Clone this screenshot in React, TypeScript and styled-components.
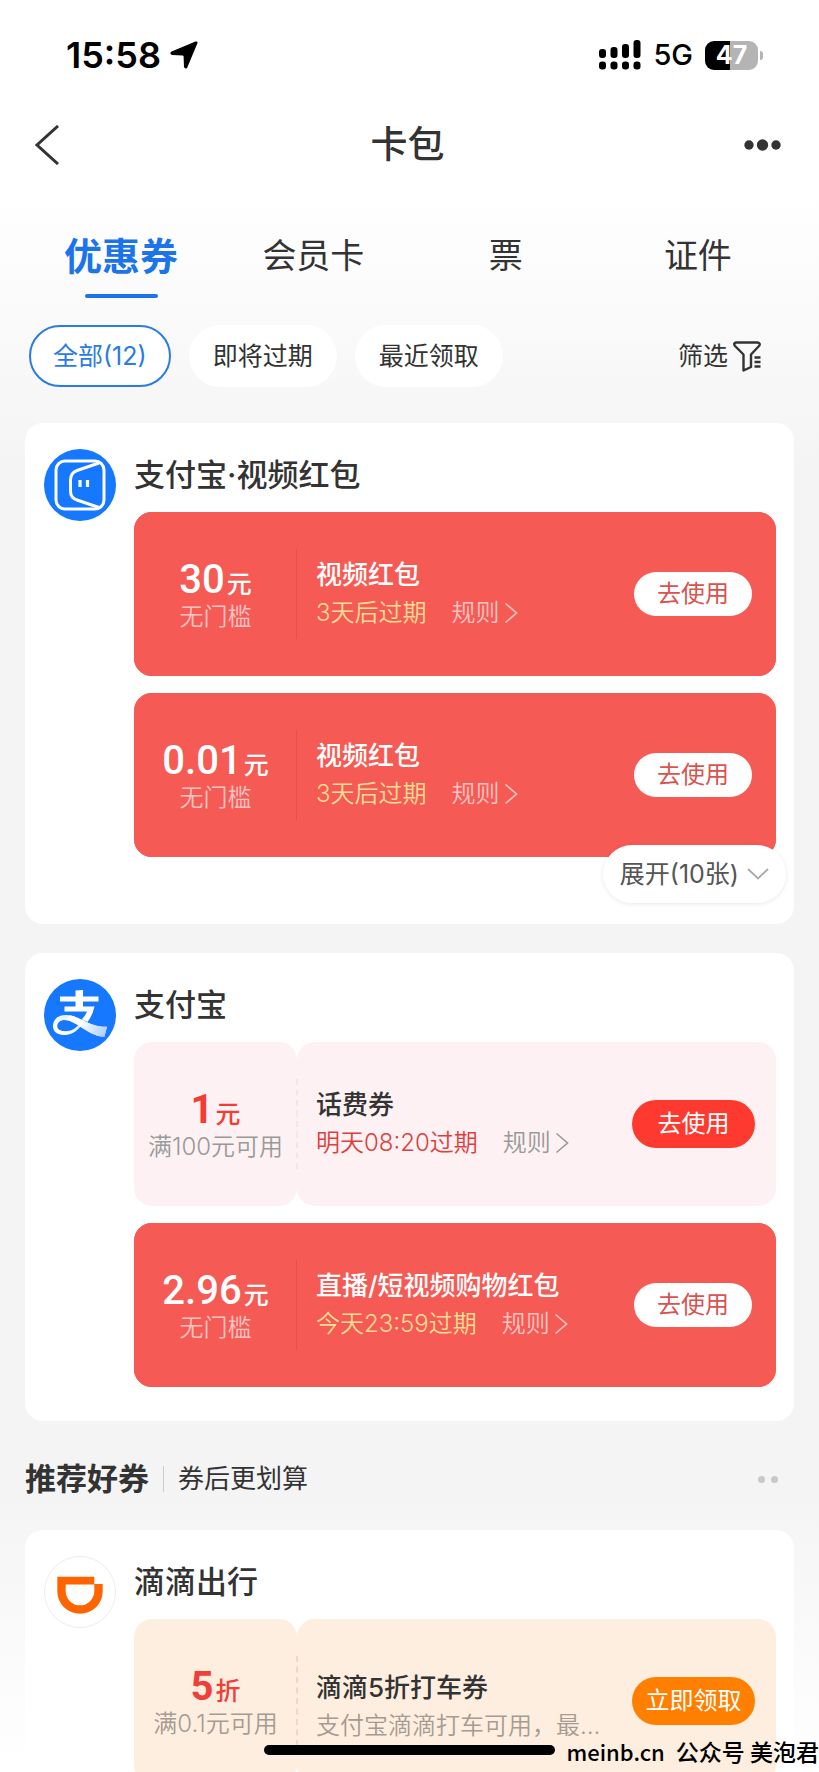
import React from 'react';
import styled, { createGlobalStyle, css } from 'styled-components';

const GlobalStyle = createGlobalStyle`
  *, *::before, *::after { box-sizing: border-box; }
  html, body, #root { height: 100%; }
  body {
    margin: 0;
    font-family: Inter, 'Noto Sans CJK SC', sans-serif;
    color: #333;
  }
  h1, h2, h3, p { margin: 0; font-weight: 500; }
  button {
    font: inherit;
    color: inherit;
    background: none;
    border: 0;
    padding: 0;
    cursor: pointer;
  }
  a { color: inherit; text-decoration: none; }
`;

const Screen = styled.div`
  position: relative;
  height: 100vh;
  overflow: hidden;
  display: flex;
  flex-direction: column;
  background: linear-gradient(#fff 0, #fff 190px, #f4f4f4 470px, #f4f4f4 84%, #fff 100%);
`;

const StatusBar = styled.div`
  flex: none;
  height: 110px;
  padding: 0 61px 0 66px;
  display: flex;
  align-items: center;
  justify-content: space-between;
  color: #000;
`;

const StatusGroup = styled.div<{ $gap: number }>`
  display: flex;
  align-items: center;
  gap: ${p => p.$gap}px;
`;

const Clock = styled.span`
  font-size: 36px;
  line-height: 40px;
  font-weight: 600;
`;

const Network = styled.span`
  font-size: 29px;
  line-height: 32px;
  font-weight: 500;
`;

const Battery = styled.span`
  position: relative;
  width: 53px;
  height: 29px;
  border-radius: 9px;
  background: linear-gradient(90deg, #000 47%, #b4b4b4 47%);
  color: #fff;
  font-size: 25px;
  line-height: 29px;
  font-weight: 700;
  text-align: center;

  &::after {
    content: '';
    position: absolute;
    right: -5px;
    top: 10px;
    width: 3px;
    height: 9px;
    border-radius: 0 3px 3px 0;
    background: #b4b4b4;
  }
`;

const NavBar = styled.header`
  flex: none;
  height: 70px;
  padding: 0 38px 0 34px;
  display: grid;
  grid-template-columns: 1fr auto 1fr;
  align-items: center;
`;

const NavTitle = styled.h1`
  font-size: 37px;
  line-height: 48px;
`;

const NavButton = styled.button<{ $end?: boolean }>`
  display: flex;
  justify-self: ${p => (p.$end ? 'end' : 'start')};
`;

const Tabs = styled.nav`
  flex: none;
  height: 118px;
  padding: 0 25px;
  display: grid;
  grid-template-columns: repeat(4, 1fr);
  align-items: end;
`;

const Tab = styled.button<{ $active?: boolean }>`
  height: 72px;
  display: flex;
  flex-direction: column;
  align-items: center;
  justify-content: space-between;
  font-size: 34px;
  line-height: 60px;

  ${p => p.$active && css`
    font-size: 38px;
    font-weight: 700;
    color: #1b74ea;
    &::after {
      content: '';
      width: 73px;
      height: 4px;
      border-radius: 2px;
      background: #1b74ea;
    }
  `}
`;

const Filters = styled.div`
  flex: none;
  padding: 27px 57px 36px 29px;
  display: flex;
  align-items: center;
  gap: 18px;
`;

const Chip = styled.button<{ $active?: boolean }>`
  height: 62px;
  padding: 0 ${p => (p.$active ? 22 : 24)}px;
  border-radius: 31px;
  border: ${p => (p.$active ? '2px solid #2b7be4' : '0')};
  background: #fff;
  color: ${p => (p.$active ? '#2b7be4' : '#333')};
  font-size: 25px;
  line-height: 32px;
`;

const FilterButton = styled.button`
  margin-left: auto;
  display: flex;
  align-items: center;
  gap: 5px;
  font-size: 25px;
  line-height: 32px;
`;

const Content = styled.main`
  flex: 1;
  min-height: 0;
  padding: 0 25px;
  overflow-y: auto;
  scrollbar-width: none;
`;

const Card = styled.section`
  display: grid;
  grid-template-columns: 72px 1fr;
  column-gap: 18px;
  align-items: start;
  padding: 25px 18px 34px 19px;
  margin-bottom: 29px;
  border-radius: 18px;
  background: #fff;
`;

const Logo = styled.svg`
  width: 72px;
  height: 72px;
  margin-top: 1px;
  display: block;
`;

const CardTitle = styled.h2`
  font-size: 31px;
  line-height: 54px;
  margin-bottom: 10px;
`;

const CouponList = styled.div`
  display: grid;
  gap: 17px;
`;

type Tone = 'red' | 'pink' | 'orange';

const tones = {
  red: { bg: '#f65a54', amount: '#fff', label: '#fcc4c1', title: '#fff', note: '#ffdd95', btn: '#fff', btnText: '#d9534f' },
  pink: { bg: '#fdf1f3', amount: '#f33c34', label: '#999', title: '#333', note: '#dd403c', btn: '#fe3a30', btnText: '#fff' },
  orange: { bg: '#feeedf', amount: '#ee3f3b', label: '#a59b92', title: '#333', note: '#a59b92', btn: '#ff8000', btnText: '#fff' },
};

const CouponBox = styled.article<{ $tone: Tone }>`
  position: relative;
  display: grid;
  grid-template-columns: 163px 1fr;
  height: 164px;
  border-radius: 18px;
  background: ${p => (p.$tone === 'red' ? tones.red.bg : 'none')};

  &::after {
    content: '';
    position: absolute;
    left: 162px;
    top: 37px;
    bottom: 37px;
    border-left: ${p => (p.$tone === 'red' ? '1px solid #e4504b' : p.$tone === 'pink' ? '2px dashed #f8e3e6' : '2px dashed #efd8c6')};
  }
`;

const Part = styled.div<{ $tone: Tone }>`
  min-width: 0;
  border-radius: 18px;
  background: ${p => tones[p.$tone].bg};
`;

const AmountPart = styled(Part)`
  padding-top: 4px;
  display: flex;
  flex-direction: column;
  justify-content: center;
  align-items: center;
`;

const Amount = styled.p<{ $tone: Tone }>`
  height: 42px;
  color: ${p => tones[p.$tone].amount};
  font-family: Roboto, 'Noto Sans CJK SC', sans-serif;
  font-size: 40px;
  line-height: 46px;
  white-space: nowrap;
  font-weight: ${p => (p.$tone === 'red' ? 500 : 700)};
`;

const Unit = styled.span`
  font-size: 25px;
  font-weight: 500;
  margin-left: 2px;
`;

const Condition = styled.p<{ $tone: Tone }>`
  color: ${p => tones[p.$tone].label};
  font-size: 24px;
  line-height: 36px;
  font-weight: 350;
  white-space: nowrap;
`;

const InfoPart = styled(Part)`
  padding: 0 21px 0 19px;
  display: flex;
  align-items: center;
`;

const Info = styled.div<{ $tone: Tone }>`
  flex: 1;
  min-width: 0;
  padding: ${p => (p.$tone === 'orange' ? 12 : 0)}px 0 2px;
`;

const CouponTitle = styled.h3<{ $tone: Tone }>`
  color: ${p => tones[p.$tone].title};
  font-size: 26px;
  line-height: 39px;
`;

const Notes = styled.div`
  display: flex;
  align-items: center;
  gap: 25px;
  font-size: 24px;
  line-height: 38px;
  font-weight: 350;
`;

const Note = styled.p<{ $tone: Tone }>`
  color: ${p => tones[p.$tone].note};
  font-weight: 350;
  white-space: nowrap;
`;

const RuleLink = styled.a<{ $tone: Tone }>`
  color: ${p => tones[p.$tone].label};
  display: flex;
  align-items: center;
  gap: 4px;
  white-space: nowrap;
`;

const UseButton = styled.button<{ $tone: Tone }>`
  flex: none;
  width: ${p => (p.$tone === 'red' ? 118 : 123)}px;
  height: ${p => (p.$tone === 'red' ? 44 : 48)}px;
  margin: 0 ${p => (p.$tone === 'red' ? 3 : 0)}px 0 24px;
  border-radius: 24px;
  background: ${p => tones[p.$tone].btn};
  color: ${p => tones[p.$tone].btnText};
  font-size: 24px;
  line-height: 32px;
`;

const ExpandButton = styled.button`
  position: relative;
  display: flex;
  align-items: center;
  gap: 8px;
  height: 58px;
  margin: -12px -10px -13px auto;
  padding: 0 17px;
  border-radius: 29px;
  background: #fff;
  box-shadow: 0 1px 5px rgba(0, 0, 0, 0.09);
  color: #555;
  font-size: 25px;
  line-height: 32px;
`;

const SectionHead = styled.div`
  display: flex;
  align-items: center;
  height: 50px;
  margin: 33px 0 26px;
`;

const SectionTitle = styled.h2`
  font-size: 31px;
  line-height: 40px;
  font-weight: 700;
`;

const SectionNote = styled.p`
  margin-left: 14px;
  padding-left: 14px;
  border-left: 1px solid #ccc;
  font-size: 26px;
  line-height: 26px;
  font-weight: 400;
`;

const Dots = styled.span`
  margin: 0 16px 0 auto;
  display: flex;
  gap: 6px;

  i {
    width: 7px;
    height: 7px;
    border-radius: 50%;
    background: #c8c8c8;
  }
`;

const HomeIndicator = styled.div`
  position: absolute;
  left: 50%;
  bottom: 17px;
  width: 291px;
  height: 10px;
  margin-left: -146px;
  border-radius: 5px;
  background: #000;
`;

const Watermark = styled.p`
  position: absolute;
  right: 0;
  bottom: 3px;
  display: flex;
  gap: 11px;
  font-family: 'Noto Sans CJK SC', sans-serif;
  font-size: 23px;
  line-height: 36px;
  color: #000;
  white-space: pre;
`;

const SiteName = styled.span`
  font-size: 22px;
`;

const ChevronRight = () => (
  <svg width="14" height="22" viewBox="0 0 14 22" fill="none" stroke="currentColor" strokeWidth="1.6">
    <path d="M1.5 1.5 12.5 11 1.5 20.5" />
  </svg>
);

const VideoLogo = () => (
  <Logo viewBox="0 0 72 72" fill="none" stroke="#fff" strokeWidth="3">
    <circle cx="36" cy="36" r="36" fill="#1677ff" stroke="none" />
    <rect x="12" y="12" width="48" height="48" rx="9" />
    <path d="M55 14 33 21.500Q26.500 24 26.500 31V42Q26.500 49 33 51L55 58.500" />
    <path d="M36 31V38M43.500 31V38" strokeWidth="3.200" />
  </Logo>
);

const AlipayLogo = () => (
  <Logo viewBox="0 0 72 72" fill="none">
    <defs>
      <linearGradient id="tail" x1="36" y1="44" x2="62" y2="56" gradientUnits="userSpaceOnUse">
        <stop offset="0" stopColor="#fff" />
        <stop offset="1" stopColor="#a9cdff" />
      </linearGradient>
      <linearGradient id="loop" x1="46" y1="34" x2="24" y2="56" gradientUnits="userSpaceOnUse">
        <stop offset="0" stopColor="#fff" />
        <stop offset="0.400" stopColor="#cfe2ff" />
        <stop offset="1" stopColor="#fff" />
      </linearGradient>
    </defs>
    <circle cx="36" cy="36" r="36" fill="#1677ff" />
    <path d="M31.500 11.500 39 11V17.500H54.500V22.500H39V27.500H50.500Q48.500 36.500 43.500 43L38 40Q41.500 36.500 43 32.500H20.500V27.500H31.500V22.500H16V17.500H31.500Z" fill="#fff" />
    <path d="M41 41C36 50 29 56 20 56C12.500 56 8.500 52 9 46C10 38.500 16 35.500 23 36C31 36.500 39 42 47 45C52 47 57 47.800 63 47.800L60.500 57.500C54 58 47 54.500 40 50C33 45.500 26 40.500 20 41C15 41.500 12.500 45 13.500 48.500C15 53 24 53 29 50.500C33 48 36 44.500 38 40Z" fill="url(#loop)" />
    <path d="M26 36.200C33 37.500 40 42.500 47 45C52 47 57 47.800 63 47.800L60.500 57.500C54 58 47 54.500 40 50C33 45.500 26 40.500 20 41Z" fill="url(#tail)" />
  </Logo>
);

const DidiLogo = () => (
  <Logo viewBox="0 0 73 73" fill="none">
    <circle cx="36.500" cy="36.500" r="36" fill="#fff" stroke="#ececec" />
    <path d="M13.500 21H51V28.500H59.500V36A23 22.500 0 0 1 13.500 36ZM22 29V35.500A14.500 14.500 0 0 0 51 35.500V29Z" fill="#ff6400" fillRule="evenodd" />
  </Logo>
);

interface CouponProps {
  tone: Tone;
  amount: string;
  unit: string;
  condition: string;
  title: string;
  note: string;
  rules?: boolean;
  action: string;
}

const Coupon = ({ tone, amount, unit, condition, title, note, rules, action }: CouponProps) => (
  <CouponBox $tone={tone}>
    <AmountPart $tone={tone}>
      <Amount $tone={tone}>{amount}<Unit>{unit}</Unit></Amount>
      <Condition $tone={tone}>{condition}</Condition>
    </AmountPart>
    <InfoPart $tone={tone}>
      <Info $tone={tone}>
        <CouponTitle $tone={tone}>{title}</CouponTitle>
        <Notes>
          <Note $tone={tone}>{note}</Note>
          {rules && <RuleLink $tone={tone} href="#rules">规则<ChevronRight /></RuleLink>}
        </Notes>
      </Info>
      <UseButton $tone={tone}>{action}</UseButton>
    </InfoPart>
  </CouponBox>
);

export default function App() {
  return (
    <Screen>
      <GlobalStyle />
      <StatusBar>
        <StatusGroup $gap={9}>
          <Clock>15:58</Clock>
          <svg width="28" height="28" viewBox="0 0 28 28">
            <path d="M25.500 .6Q28.200-.2 27.300 2.500L17.500 26Q16 29 14 26L13.600 15.500Q13.500 14.600 12.700 14.500L2 14Q-1 12.500 1.600 10.600Z" fill="#000" />
          </svg>
        </StatusGroup>
        <StatusGroup $gap={12}>
          <svg width="42" height="30" viewBox="0 0 42 30" fill="#000">
            <rect x="0" y="9" width="7" height="9" rx="3" />
            <rect x="11.500" y="7" width="7" height="11" rx="3" />
            <rect x="23" y="4" width="7" height="14" rx="3" />
            <rect x="34.500" y="0" width="7" height="18" rx="3" />
            <rect x="0" y="21.500" width="7" height="8" rx="3" />
            <rect x="11.500" y="21.500" width="7" height="8" rx="3" />
            <rect x="23" y="21.500" width="7" height="8" rx="3" />
            <rect x="34.500" y="21.500" width="7" height="8" rx="3" />
          </svg>
          <Network>5G</Network>
          <Battery>47</Battery>
        </StatusGroup>
      </StatusBar>

      <NavBar>
        <NavButton aria-label="返回">
          <svg width="26" height="40" viewBox="0 0 26 40" fill="none" stroke="#333" strokeWidth="3">
            <path d="M24 1 3 20 24 39" />
          </svg>
        </NavButton>
        <NavTitle>卡包</NavTitle>
        <NavButton $end aria-label="更多">
          <svg width="37" height="12" viewBox="0 0 37 12" fill="#333">
            <circle cx="5" cy="6" r="4.700" />
            <circle cx="18.500" cy="6" r="5.700" />
            <circle cx="32" cy="6" r="4.700" />
          </svg>
        </NavButton>
      </NavBar>

      <Tabs>
        <Tab $active>优惠券</Tab>
        <Tab>会员卡</Tab>
        <Tab>票</Tab>
        <Tab>证件</Tab>
      </Tabs>

      <Filters>
        <Chip $active>全部(12)</Chip>
        <Chip>即将过期</Chip>
        <Chip>最近领取</Chip>
        <FilterButton>
          筛选
          <svg width="29" height="31" viewBox="0 0 29 31" fill="none" stroke="#333" strokeWidth="2.400" strokeLinejoin="round">
            <path d="M3 1.500H24.500Q28 2 26 5L18 13.500V26L10.500 29.500V13.500L2 5Q0 2 3 1.500Z" />
            <path d="M21.500 16.500H27.500M21.500 21H27.500M21.500 25.500H27.500" />
          </svg>
        </FilterButton>
      </Filters>

      <Content>
        <Card>
          <VideoLogo />
          <div>
            <CardTitle>支付宝·视频红包</CardTitle>
            <CouponList>
              <Coupon tone="red" amount="30" unit="元" condition="无门槛" title="视频红包" note="3天后过期" rules action="去使用" />
              <Coupon tone="red" amount="0.01" unit="元" condition="无门槛" title="视频红包" note="3天后过期" rules action="去使用" />
            </CouponList>
            <ExpandButton>
              展开(10张)
              <svg width="22" height="12" viewBox="0 0 22 12" fill="none" stroke="#aaa" strokeWidth="1.800">
                <path d="M1 1 11 10.500 21 1" />
              </svg>
            </ExpandButton>
          </div>
        </Card>

        <Card>
          <AlipayLogo />
          <div>
            <CardTitle>支付宝</CardTitle>
            <CouponList>
              <Coupon tone="pink" amount="1" unit="元" condition="满100元可用" title="话费券" note="明天08:20过期" rules action="去使用" />
              <Coupon tone="red" amount="2.96" unit="元" condition="无门槛" title="直播/短视频购物红包" note="今天23:59过期" rules action="去使用" />
            </CouponList>
          </div>
        </Card>

        <SectionHead>
          <SectionTitle>推荐好券</SectionTitle>
          <SectionNote>券后更划算</SectionNote>
          <Dots><i /><i /></Dots>
        </SectionHead>

        <Card>
          <DidiLogo />
          <div>
            <CardTitle>滴滴出行</CardTitle>
            <CouponList>
              <Coupon tone="orange" amount="5" unit="折" condition="满0.1元可用" title="滴滴5折打车券" note="支付宝滴滴打车可用，最…" action="立即领取" />
            </CouponList>
          </div>
        </Card>
      </Content>

      <HomeIndicator />
      <Watermark><SiteName>meinb.cn</SiteName><span>公众号 美泡君</span></Watermark>
    </Screen>
  );
}
